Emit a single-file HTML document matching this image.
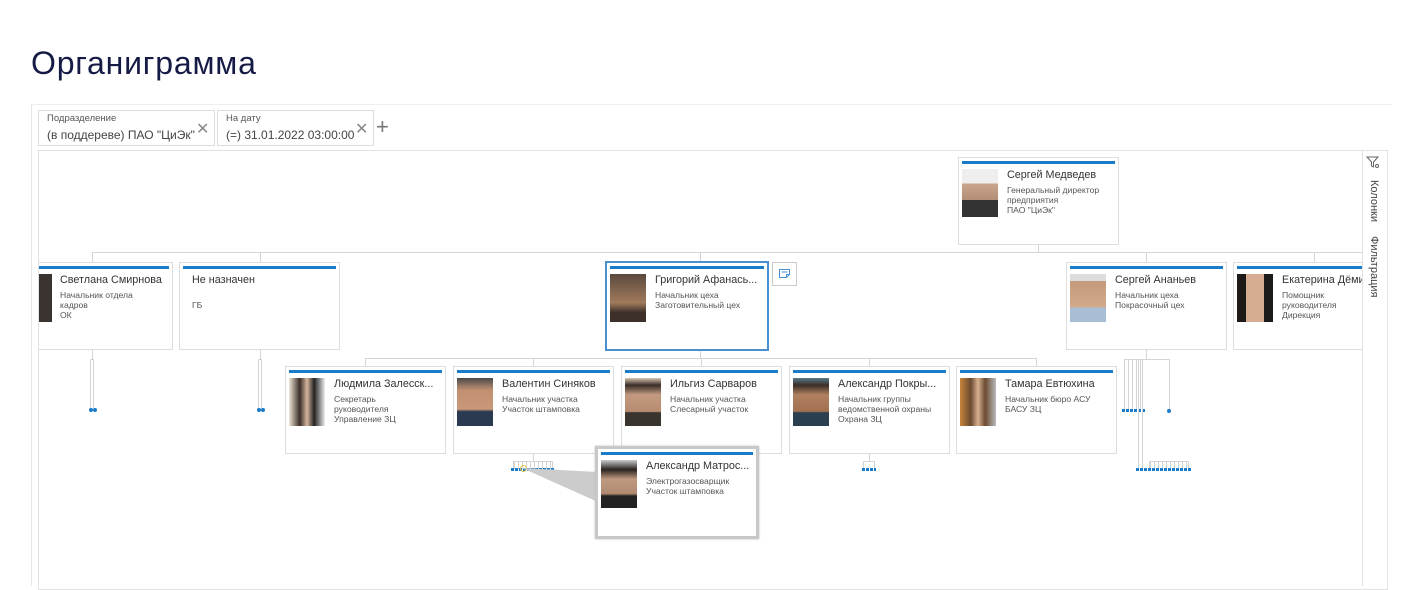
<!DOCTYPE html>
<html><head><meta charset="utf-8">
<style>
*{box-sizing:border-box;margin:0;padding:0}
body{width:1424px;height:586px;background:#fff;font-family:"Liberation Sans",sans-serif;position:relative;overflow:hidden}
.abs{position:absolute}
h1{position:absolute;left:31px;top:45px;font-size:32px;font-weight:400;color:#161b45;letter-spacing:0.8px}
.chip{position:absolute;top:110px;height:36px;border:1px solid #ddd;background:#fff}
.chip .l{position:absolute;left:8px;top:2px;font-size:9.5px;color:#555}
.chip .v{position:absolute;left:8px;top:17px;font-size:12px;color:#444;white-space:nowrap}
.chip .x{position:absolute;top:8px;font-size:16px;color:#888}
.card{position:absolute;width:161px;height:88px;border:1px solid #ddd;background:#fff;overflow:hidden}
.card .bar{position:absolute;left:3px;right:3px;top:3px;height:3px;background:#1a7bc9}
.card .ph{position:absolute;left:3px;top:11px;width:36px;height:48px}
.card .n{position:absolute;left:48px;top:11px;font-size:10.8px;color:#333;white-space:nowrap}
.card .s{position:absolute;left:48px;top:27px;font-size:8.6px;line-height:10px;color:#555;white-space:nowrap}
.hl{position:absolute;height:1px;background:#d4d4d4}
.vl{position:absolute;width:1px;background:#d4d4d4}
.dot{position:absolute;width:4px;height:4px;border-radius:50%;background:#1a7bc9}
</style></head><body>
<h1>Органиграмма</h1>
<div class="hl" style="left:31px;top:104px;width:1361px;background:#eee"></div>
<div class="vl" style="left:31px;top:104px;height:482px;background:#e6e6e6"></div>

<div class="chip" style="left:38px;width:177px"><div class="l">Подразделение</div><div class="v">(в поддереве) ПАО "ЦиЭк"</div><div class="x" style="left:157px">✕</div></div>
<div class="chip" style="left:217px;width:157px"><div class="l">На дату</div><div class="v">(=) 31.01.2022 03:00:00</div><div class="x" style="left:137px">✕</div></div>
<div class="abs" style="left:376px;top:114px;font-size:22px;color:#777;font-weight:300">+</div>

<div class="abs" style="left:38px;top:150px;width:1350px;height:440px;border:1px solid #e2e2e2"></div>
<div class="vl" style="left:1362px;top:150px;height:436px;background:#e2e2e2"></div>
<svg class="abs" style="left:1366px;top:155px" width="14" height="14" viewBox="0 0 14 14"><path d="M1 2h11l-4.5 5v5l-2-1V7z" fill="none" stroke="#666" stroke-width="1"/><circle cx="11" cy="11" r="1.5" fill="none" stroke="#666"/></svg>
<div class="abs" style="left:1368px;top:180px;writing-mode:vertical-rl;font-size:11px;color:#444">Колонки</div>
<div class="abs" style="left:1368px;top:236px;writing-mode:vertical-rl;font-size:11px;color:#444">Фильтрация</div>

<!-- connectors -->
<div class="vl" style="left:1038px;top:244px;height:8px"></div>
<div class="hl" style="left:92px;top:252px;width:1270px"></div>
<div class="vl" style="left:92px;top:252px;height:10px"></div>
<div class="vl" style="left:260px;top:252px;height:10px"></div>
<div class="vl" style="left:700px;top:252px;height:10px"></div>
<div class="vl" style="left:1146px;top:252px;height:10px"></div>
<div class="vl" style="left:1314px;top:252px;height:10px"></div>
<div class="vl" style="left:700px;top:349px;height:9px"></div>
<div class="hl" style="left:365px;top:358px;width:672px"></div>
<div class="vl" style="left:365px;top:358px;height:8px"></div>
<div class="vl" style="left:533px;top:358px;height:8px"></div>
<div class="vl" style="left:701px;top:358px;height:8px"></div>
<div class="vl" style="left:869px;top:358px;height:8px"></div>
<div class="vl" style="left:1036px;top:358px;height:8px"></div>
<div class="vl" style="left:92px;top:349px;height:10px"></div>
<div class="abs" style="left:90px;top:359px;width:4px;height:50px;border:1px solid #d4d4d4;border-bottom:none"></div>
<div class="dot" style="left:89px;top:408px"></div><div class="dot" style="left:93px;top:408px"></div>
<div class="vl" style="left:260px;top:349px;height:10px"></div>
<div class="abs" style="left:258px;top:359px;width:4px;height:50px;border:1px solid #d4d4d4;border-bottom:none"></div>
<div class="dot" style="left:257px;top:408px"></div><div class="dot" style="left:261px;top:408px"></div>
<div class="vl" style="left:533px;top:453px;height:8px"></div>
<div class="abs" style="left:513px;top:461px;width:40px;height:8px;border:1px solid #d4d4d4;border-bottom:none;background:repeating-linear-gradient(90deg,#d4d4d4 0 1px,transparent 1px 4px)"></div>
<div class="abs" style="left:511px;top:468px;width:44px;height:3px;background:repeating-linear-gradient(90deg,#1a7bc9 0 3px,transparent 3px 4px)"></div>
<div class="abs" style="left:520px;top:465px;width:7px;height:7px;border:1px solid #e6c84a;border-radius:50%"></div>
<div class="vl" style="left:869px;top:453px;height:8px"></div>
<div class="abs" style="left:863px;top:461px;width:12px;height:8px;border:1px solid #d4d4d4;border-bottom:none"></div>
<div class="abs" style="left:862px;top:468px;width:14px;height:3px;background:repeating-linear-gradient(90deg,#1a7bc9 0 3px,transparent 3px 4px)"></div>
<div class="vl" style="left:1146px;top:349px;height:10px"></div>
<div class="abs" style="left:1124px;top:359px;width:46px;height:52px;background:repeating-linear-gradient(90deg,#d4d4d4 0 1px,transparent 1px 4px);background-size:20px 52px;background-repeat:no-repeat;border-top:1px solid #d4d4d4"></div>
<div class="vl" style="left:1169px;top:359px;height:52px"></div>
<div class="abs" style="left:1122px;top:409px;width:24px;height:3px;background:repeating-linear-gradient(90deg,#1a7bc9 0 3px,transparent 3px 4px)"></div>
<div class="dot" style="left:1167px;top:409px"></div>
<div class="vl" style="left:1138px;top:359px;height:110px"></div>
<div class="vl" style="left:1142px;top:359px;height:110px"></div>
<div class="abs" style="left:1149px;top:461px;width:40px;height:8px;border:1px solid #d4d4d4;border-bottom:none;background:repeating-linear-gradient(90deg,#d4d4d4 0 1px,transparent 1px 4px)"></div>
<div class="abs" style="left:1136px;top:468px;width:56px;height:3px;background:repeating-linear-gradient(90deg,#1a7bc9 0 3px,transparent 3px 4px)"></div>
<svg class="abs" style="left:520px;top:462px" width="80" height="50"><polygon points="2,6 78,10 78,40" fill="#ccc"/></svg>

<div class="card" style="left:958px;top:157px"><div class="bar"></div><div class="ph" style="background:linear-gradient(#eee 0,#eee 30%,#c9a58c 30%,#b38e77 65%,#333 65%)"></div><div class="n">Сергей Медведев</div><div class="s">Генеральный директор<br>предприятия<br>ПАО "ЦиЭк"</div></div>

<div class="card" style="left:39px;top:262px;width:134px;border-left:none"><div class="bar" style="left:0"></div><div class="ph" style="left:0;width:13px;background:#3a3330"></div><div class="n" style="left:21px">Светлана Смирнова</div><div class="s" style="left:21px">Начальник отдела<br>кадров<br>ОК</div></div>
<div class="card" style="left:179px;top:262px"><div class="bar"></div><div class="n" style="left:12px">Не назначен</div><div class="s" style="left:12px;top:37px">ГБ</div></div>
<div class="card" style="left:605px;top:261px;width:164px;height:90px;border:2px solid #4a8fd0"><div class="bar"></div><div class="ph" style="background:linear-gradient(#5a4a3e 0,#8a6a52 40%,#a07a5c 60%,#3d302a 80%)"></div><div class="n">Григорий Афанась...</div><div class="s">Начальник цеха<br>Заготовительный цех</div></div>
<div class="abs" style="left:772px;top:262px;width:25px;height:24px;border:1px solid #ccc;background:#fff"></div>
<svg class="abs" style="left:778px;top:267px" width="13" height="13"><path d="M1.5 2.5h10v5l-3 3h-7z M8.5 10.5v-3h3" fill="none" stroke="#4a8fd0" stroke-width="1"/><path d="M3.5 5h6" stroke="#4a8fd0"/></svg>
<div class="card" style="left:1066px;top:262px"><div class="bar"></div><div class="ph" style="background:linear-gradient(#ddd 0,#ddd 15%,#c49a7d 15%,#d4aa8c 70%,#a8bed4 70%)"></div><div class="n">Сергей Ананьев</div><div class="s">Начальник цеха<br>Покрасочный цех</div></div>
<div class="card" style="left:1233px;top:262px;width:129px;border-right:none"><div class="bar" style="right:0"></div><div class="ph" style="background:linear-gradient(90deg,#1e1a18 0,#1e1a18 25%,#d6ad93 25%,#d6ad93 75%,#1e1a18 75%)"></div><div class="n">Екатерина Дёмина</div><div class="s">Помощник<br>руководителя<br>Дирекция</div></div>

<div class="card" style="left:285px;top:366px"><div class="bar"></div><div class="ph" style="background:linear-gradient(90deg,#f0e8d8 0,#3a2e28 30%,#d7b59e 50%,#222 70%,#eee 100%)"></div><div class="n">Людмила Залесск...</div><div class="s">Секретарь<br>руководителя<br>Управление ЗЦ</div></div>
<div class="card" style="left:453px;top:366px"><div class="bar"></div><div class="ph" style="background:linear-gradient(#4a4a4a 0,#c09070 25%,#c89878 65%,#2a3a50 70%)"></div><div class="n">Валентин Синяков</div><div class="s">Начальник участка<br>Участок штамповка</div></div>
<div class="card" style="left:621px;top:366px"><div class="bar"></div><div class="ph" style="background:linear-gradient(#d8c4b0 0,#3a2e28 15%,#c49a80 35%,#b88c70 70%,#3a342e 72%)"></div><div class="n">Ильгиз Сарваров</div><div class="s">Начальник участка<br>Слесарный участок</div></div>
<div class="card" style="left:789px;top:366px"><div class="bar"></div><div class="ph" style="background:linear-gradient(#5a7a8a 0,#3a2e28 15%,#b08060 35%,#a07050 70%,#2a4050 72%)"></div><div class="n">Александр Покры...</div><div class="s">Начальник группы<br>ведомственной охраны<br>Охрана ЗЦ</div></div>
<div class="card" style="left:956px;top:366px"><div class="bar"></div><div class="ph" style="background:linear-gradient(90deg,#c8843a 0,#6a4a30 30%,#d8b090 50%,#6a4a30 70%,#bbb 100%)"></div><div class="n">Тамара Евтюхина</div><div class="s">Начальник бюро АСУ<br>БАСУ ЗЦ</div></div>

<div class="card" style="left:595px;top:446px;width:164px;height:93px;border:3px solid #c8c8c8;box-shadow:0 0 2px #bbb"><div class="bar"></div><div class="ph" style="background:linear-gradient(#ccc 0,#2a2420 20%,#c09a80 40%,#b08a70 70%,#222 75%)"></div><div class="n">Александр Матрос...</div><div class="s">Электрогазосварщик<br>Участок штамповка</div></div>
</body></html>
